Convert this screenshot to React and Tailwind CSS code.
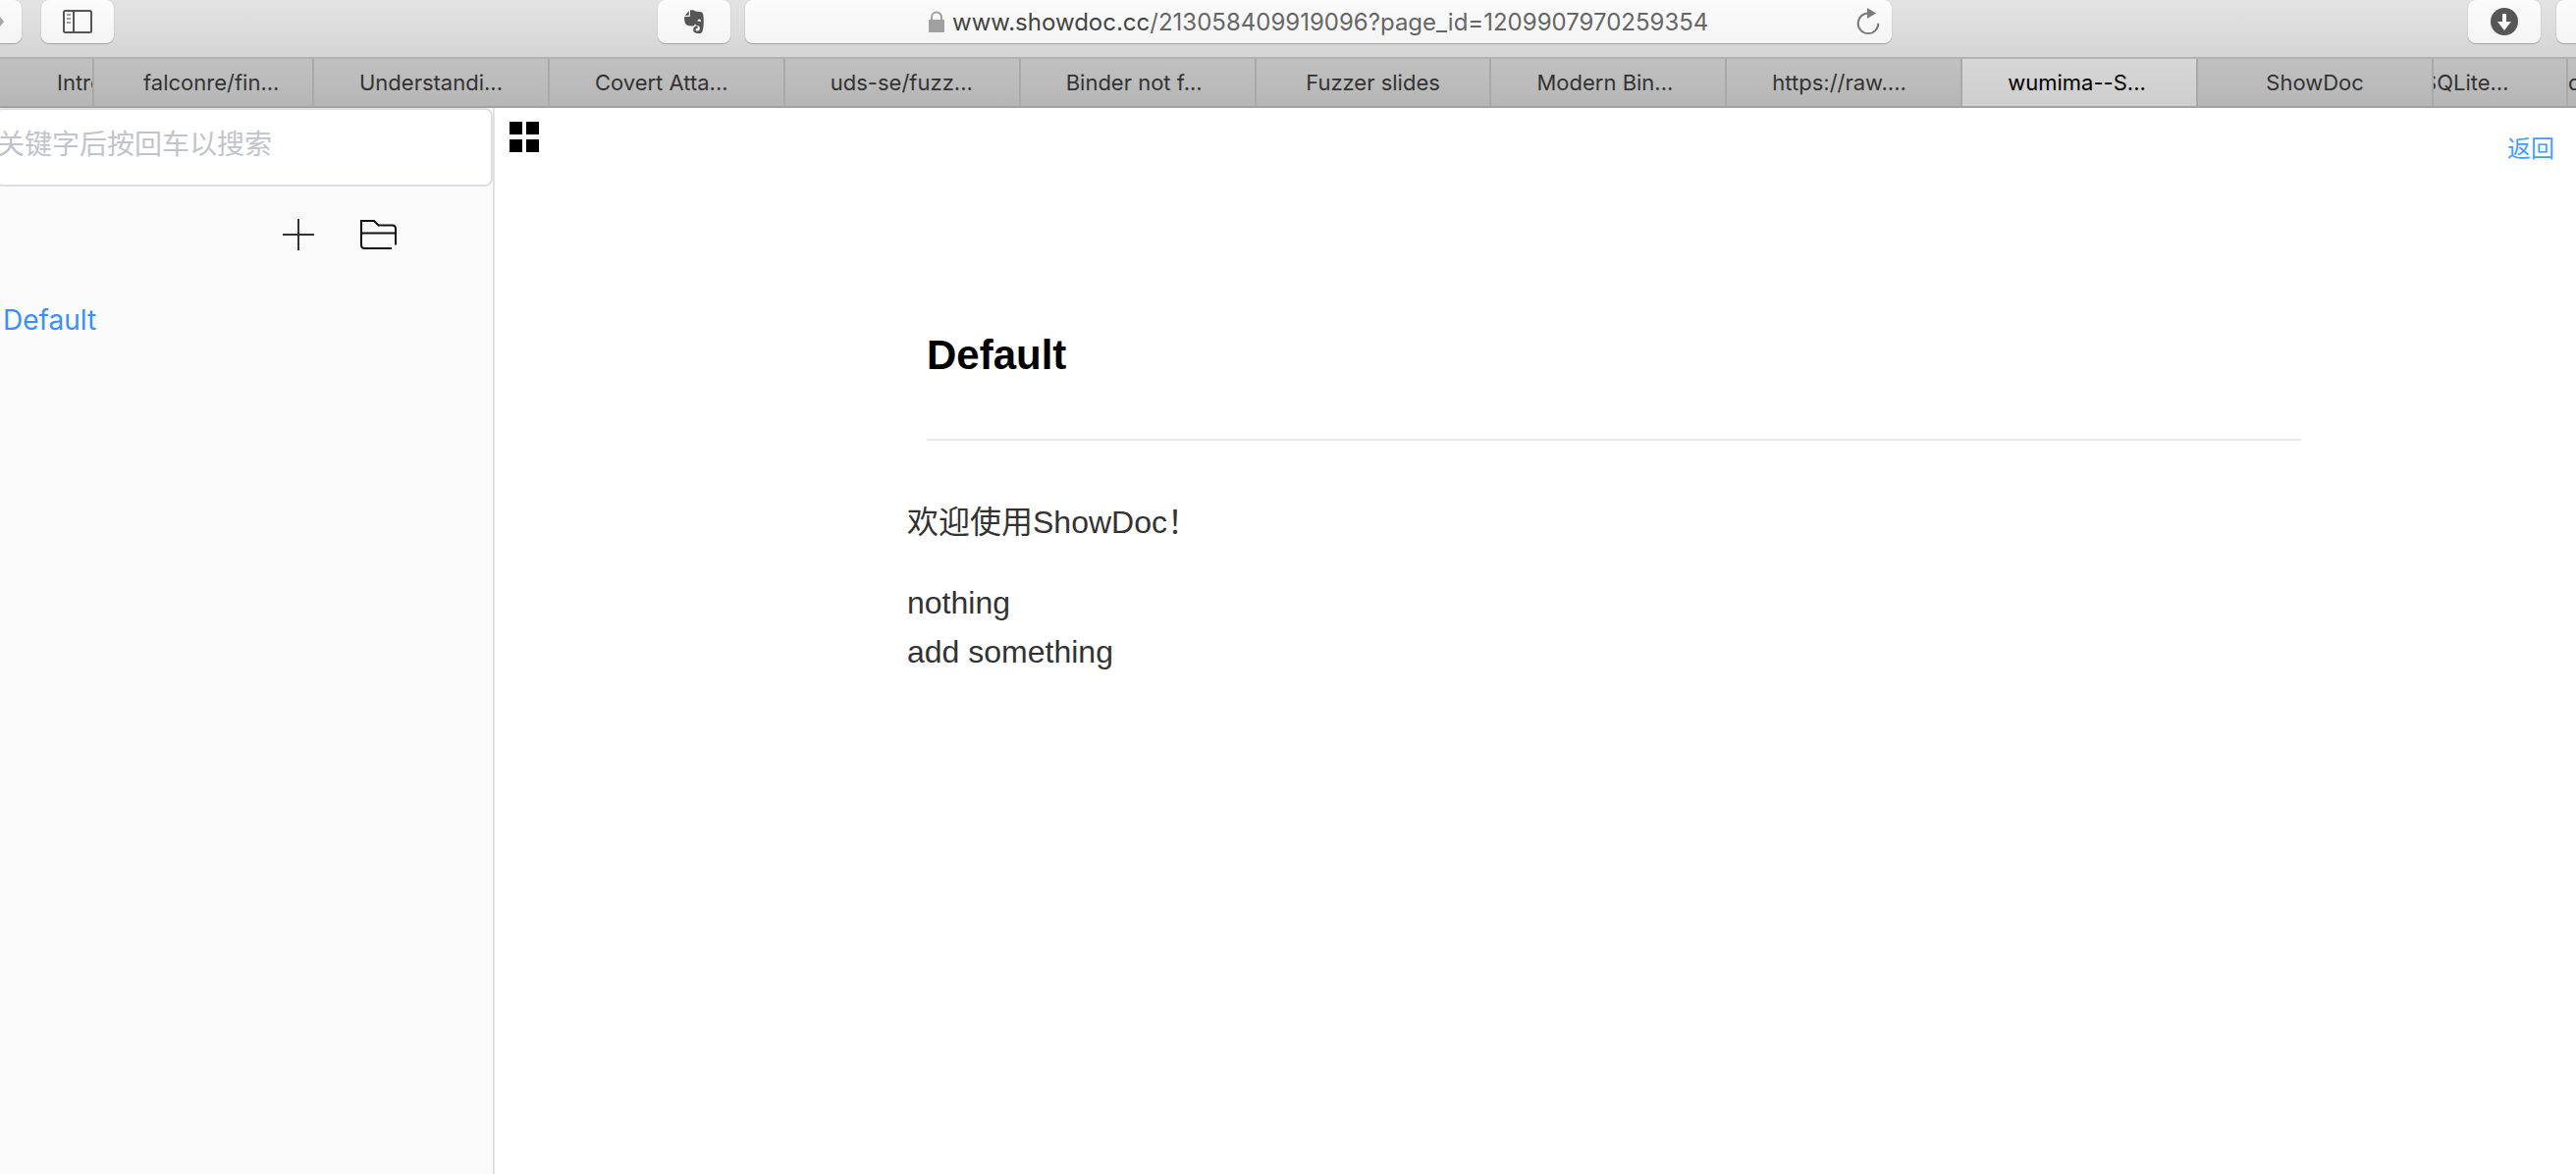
const toolButton =
  "flex h-11 shrink-0 items-center justify-center rounded-lg bg-linear-to-b from-[#fcfcfc] to-[#f4f4f4] shadow-[0_1px_1px_#a0a0a0,0_0_1px_#b0b0b0]";

const tabs = [
  { label: "falconre/fin...", size: "w-56", inset: "pl-[50px]" },
  { label: "Understandi...", size: "flex-1", inset: "pl-[46px]" },
  { label: "Covert Atta...", size: "flex-1", inset: "pl-[46px]" },
  { label: "uds-se/fuzz...", size: "flex-1", inset: "pl-[46px]" },
  { label: "Binder not f...", size: "flex-1", inset: "pl-[46px]" },
  { label: "Fuzzer slides", size: "flex-1 justify-center", inset: "" },
  { label: "Modern Bin...", size: "flex-1", inset: "pl-[46px]" },
  { label: "https://raw....", size: "flex-1", inset: "pl-[46px]" },
  { label: "wumima--S...", size: "flex-1", inset: "pl-[46px]", active: true },
  { label: "ShowDoc", size: "flex-1 justify-center", inset: "" },
];

const tabBase =
  "flex min-w-0 items-center overflow-hidden whitespace-nowrap border-r-2 border-[#a9a9a9]";

function SidebarIcon() {
  return (
    <svg width="30" height="24" viewBox="0 0 30 24" fill="none" stroke="#565656" aria-hidden="true">
      <rect x="1" y="1" width="28" height="22" rx="1.5" strokeWidth="2" />
      <path d="M11 1v22" strokeWidth="2" />
      <path d="M4 5h4M4 9h4M4 13h4" strokeWidth="2" stroke="#a0a0a0" />
    </svg>
  );
}

function ElephantIcon() {
  return (
    <svg width="20" height="24" viewBox="0 0 20 24" aria-hidden="true">
      <path
        fill="#565656"
        d="M6 0.6C7 0 10 0 11.5 1.4C13.5 1.8 17 2 18 2.5C19.4 3.2 19.8 7 19.8 11C19.8 16 19.4 20.5 18.2 22.4C17.4 24 15.500 24 13.500 24C10.800 24 9.200 22.800 9.200 20.200C9.200 17.800 10.800 16.600 12.600 16.600H13.600V19H12.800C11.700 19 11.500 19.600 11.500 20.300C11.500 21.400 12.300 21.700 13.600 21.600C15.400 21.500 15.800 20.400 15.800 18.600C15.800 17.300 15.300 16.400 13.500 16C11.800 15.600 11.400 15.200 11 13.900C10.600 15.800 9.500 16.700 7.600 16.500C3.500 16.200 1.600 15.500 1 13.500C0.300 11.500 0 9.500 0 8C0 7.200 0.500 6.900 1.200 6.900H4.500C5.600 6.900 6 6.500 6 5.400Z"
      />
      <path fill="#565656" d="M4.800 1.200V5C4.800 5.600 4.600 5.800 4 5.800H0.600Z" />
      <path fill="#f8f8f8" d="M13.600 12C13.600 10.300 14.200 9.400 15.200 9.400C16.500 9.400 17 10.600 17 12.200C16 11.700 14.800 11.600 13.600 12Z" />
    </svg>
  );
}

function LockIcon() {
  return (
    <svg width="16" height="22" viewBox="0 0 16 22" aria-hidden="true">
      <path d="M3 10V6.500a5 5 0 0 1 10 0V10" fill="none" stroke="#a0a0a0" strokeWidth="2" />
      <rect y="9" width="16" height="13" rx="1" fill="#a0a0a0" />
    </svg>
  );
}

function ReloadIcon() {
  return (
    <svg width="24" height="28" viewBox="0 0 24 28" aria-hidden="true">
      <path d="M12 5.500A10.300 10.300 0 1 0 22.300 15.800" fill="none" stroke="#7b7b7b" strokeWidth="2" />
      <path d="M11 0l9 5.500l-9 5.500z" fill="#7b7b7b" />
    </svg>
  );
}

function DownloadIcon() {
  return (
    <svg width="28" height="28" viewBox="0 0 28 28" aria-hidden="true">
      <circle cx="14" cy="14" r="14" fill="#565656" />
      <path d="M12 6h4v8h5l-7 9l-7-9h5z" fill="#fafafa" />
    </svg>
  );
}

function Toolbar() {
  return (
    <header className="flex h-[60px] items-start border-b-2 border-[#b2b2b2] bg-linear-to-b from-[#e3e3e3] to-[#d5d5d5]">
      <button aria-label="Forward" className={`${toolButton} w-[22px] rounded-l-none`}>
        <svg width="22" height="12" viewBox="0 0 22 12" aria-hidden="true">
          <path d="M0 1.500L3.500 6L0 10.500z" fill="#a8a8a8" stroke="#a8a8a8" strokeWidth="1" />
        </svg>
      </button>
      <button aria-label="Show sidebar" className={`${toolButton} ml-5 w-[74px]`}>
        <SidebarIcon />
      </button>
      <div className="flex flex-12 justify-end">
        <button aria-label="Clip page" className={`${toolButton} mr-[15px] w-[74px]`}>
          <ElephantIcon />
        </button>
      </div>
      <div className={`${toolButton} w-[44.5%] pr-3`}>
        <div className="flex flex-1 items-center justify-center gap-2 pl-9 text-[24px] leading-[44px] text-[#666]">
          <LockIcon />
          <span className="pt-0.5">
            <span className="text-[#444]">www.showdoc.cc</span>/213058409919096?page_id=1209907970259354
          </span>
        </div>
        <button aria-label="Reload page">
          <ReloadIcon />
        </button>
      </div>
      <div className="flex flex-13 justify-end gap-4">
        <button aria-label="Downloads" className={`${toolButton} w-[74px]`}>
          <DownloadIcon />
        </button>
        <button aria-label="Share" className={`${toolButton} w-5 rounded-r-none`} />
      </div>
    </header>
  );
}

function TabBar() {
  return (
    <nav aria-label="Tabs" className="flex h-[50px] border-b-2 border-[#a3a3a3] bg-linear-to-b from-[#c1c1c1] to-[#b6b6b6] text-[22px] text-[#333]">
      <button className={`${tabBase} w-24 pl-[58px]`}>Intro</button>
      {tabs.map((tab) => (
        <button
          key={tab.label}
          aria-current={tab.active ? "page" : undefined}
          className={`${tabBase} ${tab.size} ${tab.active ? "bg-linear-to-b from-[#d7d7d7] to-[#cecece] text-black" : ""}`}
        >
          <span className={tab.inset}>{tab.label}</span>
        </button>
      ))}
      <button className={`${tabBase} w-[137px]`}>
        <span className="-ml-[11px]">SQLite…</span>
      </button>
      <button className="flex w-2 items-center overflow-hidden">d</button>
    </nav>
  );
}

function Sidebar() {
  return (
    <aside className="w-[504px] shrink-0 overflow-hidden border-r-2 border-[#e2e2e2] bg-[#fafafa]">
      <input
        type="text"
        aria-label="搜索"
        placeholder="关键字后按回车以搜索"
        className="-ml-[5px] block h-20 w-[507px] rounded-lg border-2 border-[#dcdfe6] bg-white pb-1 text-[28px] outline-none placeholder:text-[#c0c4cc]"
      />
      <div className="flex h-[98px] items-center justify-end gap-[46px] pr-[98px]">
        <button aria-label="新建页面">
          <svg width="34" height="34" viewBox="0 0 34 34" stroke="#333" strokeWidth="2" aria-hidden="true">
            <path d="M17 1v32M1 17h32" />
          </svg>
        </button>
        <button aria-label="新建目录">
          <svg width="37" height="30" viewBox="0 0 37 30" fill="none" stroke="#111" strokeWidth="2" aria-hidden="true">
            <path d="M32 29H4.500Q1 29 1 25.500V1H14L18.500 5.500H32.500Q36 5.500 36 9V25.500M1 13.500H36" />
          </svg>
        </button>
      </div>
      <a href="#default" className="mt-[18px] ml-[3px] block font-['Inter',sans-serif] text-[28px] leading-10 text-[#3a8ffa]">
        Default
      </a>
    </aside>
  );
}

function Content() {
  return (
    <main className="min-w-0 flex-1">
      <div className="flex items-start justify-between pt-[14px] pr-[22px] pl-[15px]">
        <button aria-label="菜单" className="grid grid-cols-2 gap-x-1 gap-y-[5px]">
          <span className="size-[13px] bg-black" />
          <span className="size-[13px] bg-black" />
          <span className="size-[13px] bg-black" />
          <span className="size-[13px] bg-black" />
        </button>
        <a href="#back" className="pt-[10px] text-[24px] leading-9 text-[#409eff]">
          返回
        </a>
      </div>
      <article className="mt-[162px] mr-[280px] ml-[420px] text-[32px] leading-[50px] text-[#333]">
        <header className="ml-5 border-b-2 border-[#eaeaea] pb-[55px]">
          <h1 className="text-[42px] leading-[60px] font-bold text-black">Default</h1>
        </header>
        <p className="mt-[58px]">欢迎使用ShowDoc！</p>
        <p className="mt-8">
          nothing
          <br />
          add something
        </p>
      </article>
    </main>
  );
}

export default function App() {
  return (
    <div className="flex min-h-screen flex-col overflow-hidden bg-white font-['Inter','Noto_Sans_CJK_SC',sans-serif]">
      <Toolbar />
      <TabBar />
      <div className="flex flex-1 font-['Liberation_Sans','Noto_Sans_CJK_SC',sans-serif]">
        <Sidebar />
        <Content />
      </div>
    </div>
  );
}
